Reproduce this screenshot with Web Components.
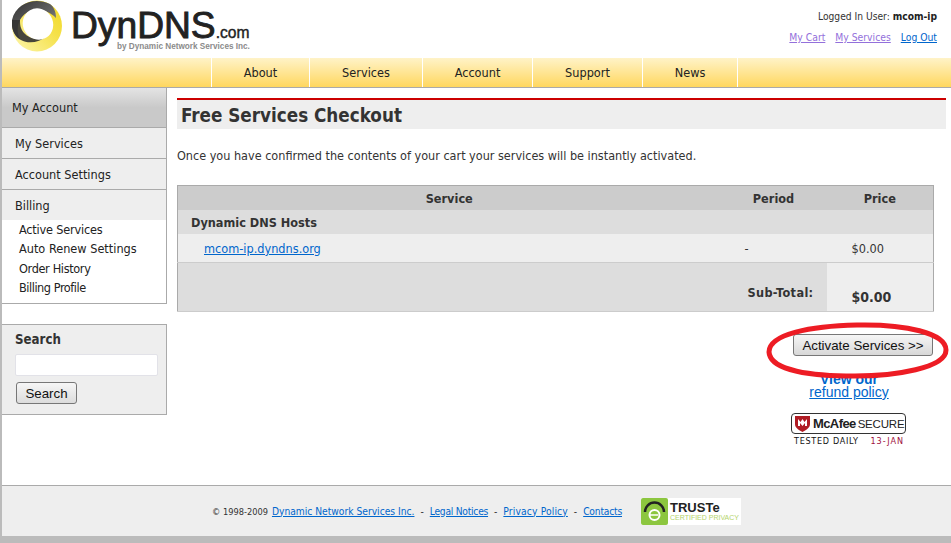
<!DOCTYPE html>
<html>
<head>
<meta charset="utf-8">
<title>DynDNS.com</title>
<style>
  html, body { margin: 0; padding: 0; background: #bbb; }
  body { height: 543px; overflow: hidden; font-family: "DejaVu Sans", sans-serif; font-stretch: condensed; font-size: 12.6px; color: #333; }
  dyn-page { height: 543px; }
</style>
</head>
<body>
<dyn-page>
  <dyn-header></dyn-header>
  <dyn-nav></dyn-nav>
  <div style="display:flex;height:397px;background:#fff">
    <dyn-sidebar></dyn-sidebar>
    <dyn-checkout></dyn-checkout>
  </div>
  <dyn-footer></dyn-footer>
</dyn-page>
<script>
class dynPage extends HTMLElement {
  constructor() {
    super();
    this.attachShadow({ mode: "open" });
    this.shadowRoot.innerHTML = `
    <style>
      :host { display: block; margin-left: 2px; position: relative; }
    </style>
    <slot></slot>`;
  }
}
class dynHeader extends HTMLElement {
  constructor() {
    super();
    this.attachShadow({ mode: "open" });
    this.shadowRoot.innerHTML = `
    <style>
      :host { display: flex; justify-content: space-between; height: 58px; background: #fff; }
      .logo { display: flex; margin-left: 10px; }
      .words { margin-left: 9px; font-family: "Liberation Sans", sans-serif; font-stretch: normal; width: 180px; }
      .name { font-size: 37.2px; line-height: 38px; color: #222; -webkit-text-stroke: .9px #222; padding-top: 6px; white-space: nowrap; }
      .name small { font-size: 15.6px; line-height: 0; -webkit-text-stroke: .4px #222; }
      .by { font-size: 8.2px; font-weight: bold; color: #8b8b8b; margin: -2px 0 0 46px; white-space: nowrap; }
      .user { padding: 11px 14px 0 0; text-align: right; font-size: 10.2px; color: #333; }
      .user b { color: #222; }
      .links { margin-top: 9px; font-size: 10.3px; }
      .links a { color: #9370db; margin-left: 7px; }
      .links a.out { color: #0066cc; }
    </style>
    <div class="logo">
      <svg width="50" height="52" viewBox="0 0 50 52">
        <defs>
          <linearGradient id="dk" x1="0" y1="0" x2="1" y2="1">
            <stop offset="0" stop-color="#333"/><stop offset=".6" stop-color="#666"/><stop offset="1" stop-color="#aaa"/>
          </linearGradient>
          <linearGradient id="yl" x1="0" y1="1" x2="1" y2="0">
            <stop offset="0" stop-color="#fdf6b0"/><stop offset=".6" stop-color="#f5e14a"/><stop offset="1" stop-color="#f0d820"/>
          </linearGradient>
        </defs>
        <ellipse cx="25" cy="26" rx="25" ry="25.5" fill="url(#yl)"/>
        <path d="M38 4 C24 -3 4 2 0 20 C-1 28 2 36 8 39 C2 28 8 12 22 10 C30 9 38 12 44 18 C44 12 42 7 38 4Z" fill="url(#dk)"/>
        <path d="M0 20 C-1 30 3 37 9 40 C16 44 27 43 35 36 C28 40 18 40 12 33 C8 28 8 24 8 20Z" fill="#333" opacity=".9"/>
        <ellipse cx="26" cy="24" rx="15" ry="16" fill="#fff" transform="rotate(-30 26 24)"/>
      </svg>
      <div class="words">
        <div class="name">DynDNS<small>.com</small></div>
        <div class="by">by Dynamic Network Services Inc.</div>
      </div>
    </div>
    <div class="user">
      <div>Logged In User: <b>mcom-ip</b></div>
      <div class="links"><a href="#">My Cart</a> <a href="#">My Services</a> <a class="out" href="#">Log Out</a></div>
    </div>`;
  }
}
class dynNav extends HTMLElement {
  constructor() {
    super();
    this.attachShadow({ mode: "open" });
    const items = [["About", 98], ["Services", 113], ["Account", 110], ["Support", 110], ["News", 96]];
    this.shadowRoot.innerHTML = `
    <style>
      :host { display: flex; height: 29px; padding-left: 209px; border-bottom: 1px solid #aaa; background: linear-gradient(#fff3c8, #ffd75f); }
      div { box-sizing: border-box; border-left: 1px solid #fff; line-height: 30px; text-align: center; color: #222; }
      div:last-child { border-right: 1px solid #fff; }
    </style>
    ${items.map(([t, w]) => `<div style="width:${w}px">${t}</div>`).join("")}`;
  }
}
class dynSidebar extends HTMLElement {
  constructor() {
    super();
    this.attachShadow({ mode: "open" });
    this.shadowRoot.innerHTML = `
    <style>
      :host { display: block; box-sizing: border-box; width: 165px; flex: none; color: #222; }
      .top { height: 39px; line-height: 40px; padding-left: 10px; background: linear-gradient(#e4e4e4, #c9c9c9 50%); border: solid #aaa; border-width: 0 1px 1px 0; }
      .item { height: 30px; line-height: 31px; padding-left: 13px; background: #eee; border: solid #aaa; border-width: 0 1px 1px 0; }
      .item.open { border-bottom: 0; }
      ul { list-style: none; margin: 0; padding: 0 0 6px 17px; background: #fff; border: solid #aaa; border-width: 0 1px 1px 0; }
      li { height: 19.3px; line-height: 20px; }
      form { margin: 20px 0 0; height: 91px; box-sizing: border-box; border: solid #aaa; border-width: 1px 1px 1px 0; background: #eee; padding: 7px 0 0 13px; }
      h4 { margin: 0; font-size: 13.2px; line-height: 16px; color: #333; }
      input { display: block; box-sizing: border-box; width: 143px; height: 22px; margin: 6px 0 0; border: 1px solid #e2e2e8; background: #fff; border-radius: 2px; padding: 0; }
      button { display: block; width: 61px; height: 22px; margin: 6px 0 0 1px; padding: 0; font: 13.3px "Liberation Sans", sans-serif; color: #111; border: 1px solid #777; border-radius: 3px; background: linear-gradient(#f6f6f6, #dcdcdc); }
    </style>
    <div class="top">My Account</div>
    <div class="item">My Services</div>
    <div class="item">Account Settings</div>
    <div class="item open">Billing</div>
    <ul>
      <li style="letter-spacing:-.2px">Active Services</li>
      <li>Auto Renew Settings</li>
      <li style="letter-spacing:-.35px">Order History</li>
      <li style="letter-spacing:-.45px">Billing Profile</li>
    </ul>
    <form onsubmit="return false">
      <h4>Search</h4>
      <input type="text">
      <button>Search</button>
    </form>`;
  }
}
class dynCheckout extends HTMLElement {
  constructor() {
    super();
    this.attachShadow({ mode: "open" });
    this.shadowRoot.innerHTML = `
    <style>
      :host { display: block; flex: 1; padding: 10px 5px 0 10px; position: relative; }
      h1 { margin: 0; height: 29px; line-height: 31px; border-top: 2px solid #c00; background: #eee; padding-left: 4px; font-size: 18.7px; font-weight: bold; color: #333; }
      p { margin: 18px 0 0; line-height: 18px; font-size: 12.53px; color: #333; }
      table { margin-top: 20px; width: 757px; border-collapse: collapse; border: solid #aaa; border-width: 1px 1px 1px 1px; border-bottom-color: #ccc; font-size: 12.6px; }
      td, th { padding: 0; box-sizing: border-box; }
      th { background: #ccc; height: 24px; color: #333; padding-top: 1px; }
      th.nudge { padding-left: 2px; }
      .group td { background: #ddd; height: 24px; font-weight: bold; padding: 1px 0 0 13px; }
      .row td { background: #eee; height: 29px; border-bottom: 1px solid #ccc; padding-top: 1px; }
      .total td { height: 49px; background: #ddd; font-weight: bold; vertical-align: bottom; }
      a { color: #0066cc; }
      .act { margin: 22px 0 0; display: flex; flex-direction: column; align-items: flex-end; }
      .act button { width: 140px; height: 22px; margin-right: 13px; padding: 0; font: 13.3px "Liberation Sans", sans-serif; color: #111; border: 1px solid #777; border-radius: 3px; background: linear-gradient(#f6f6f6, #d8d8d8); }
      .refund { width: 156px; margin: 17px 19px 0 0; text-align: center; font: 14px/12px "Liberation Sans", sans-serif; color: #0066cc; }
      .refund b { display: block; }
      .refund a { line-height: 14px; display: block; }
      .badge { margin: 14px 40px 0 0; width: 115px; font-size: 9px; letter-spacing: .7px; color: #111; }
      .mc { box-sizing: border-box; width: 115px; height: 21px; border: 1px solid #333; border-radius: 4px; display: flex; align-items: center; padding-left: 3px; font: bold 13px "Liberation Sans", sans-serif; letter-spacing: -.6px; color: #222; white-space: nowrap; }
      .mc svg { margin-right: 3px; flex: none; }
      .mc span { font-size: 11.5px; letter-spacing: -.2px; font-weight: normal; margin-left: 2px; }
      .td { display: flex; justify-content: space-between; margin: 2px 2px 0 3px; }
      .td i { font-style: normal; color: #a01040; letter-spacing: 1px; }
      .ring { position: absolute; left: 598px; top: 233px; pointer-events: none; }
    </style>
    <h1>Free Services Checkout</h1>
    <p>Once you have confirmed the contents of your cart your services will be instantly activated.</p>
    <table>
      <tr><th class="nudge" style="width:541px">Service</th><th class="nudge" style="width:108px">Period</th><th>Price</th></tr>
      <tr class="group"><td colspan="3">Dynamic DNS Hosts</td></tr>
      <tr class="row"><td style="padding-left:26px"><a href="#">mcom-ip.dyndns.org</a></td><td style="padding-left:26px;">-</td><td style="padding-left:25px">$0.00</td></tr>
      <tr class="total">
        <td colspan="2" style="text-align:right;padding:0 13px 11px 0;letter-spacing:.35px">Sub-Total:</td>
        <td style="background:#eee;padding:0 0 6px 25px;font-size:14px">$0.00</td>
      </tr>
    </table>
    <div class="act">
      <button>Activate Services &gt;&gt;</button>
      <div class="refund"><b>View our</b><a href="#">refund policy</a></div>
      <div class="badge">
        <div class="mc">
          <svg width="15" height="17" viewBox="0 0 15 17"><path d="M0 1h15v8c0 4-4 6-7.500 8C4 15 0 13 0 9Z" fill="#b01c24"/><path d="M3 11V4l2.500 3L7.500 4l2 3L12 4v7h-2V8L7.500 11 5 8v3Z" fill="#fff"/></svg>McAfee<span>SECURE</span>
        </div>
        <div class="td"><span>TESTED DAILY</span><i>13-JAN</i></div>
      </div>
    </div>
    <svg class="ring" width="186" height="60" viewBox="0 0 186 60">
      <path d="M92 4C140 3 181 12 181 29C181 47 130 55 90 55C48 55 5 50 4 31C4 13 46 5 92 4Z" fill="none" stroke="#ed1c24" stroke-width="5"/>
    </svg>`;
  }
}
class dynFooter extends HTMLElement {
  constructor() {
    super();
    this.attachShadow({ mode: "open" });
    this.shadowRoot.innerHTML = `
    <style>
      :host { display: flex; align-items: center; height: 50px; padding-left: 210px; border-top: 1px solid #aaa; background: #eee; font-size: 10.2px; color: #333; white-space: nowrap; }
      .copy { font-size: 9.2px; }
      a { color: #0066cc; margin: 0 6px; }
      a:first-of-type { margin-left: 4px; }
      .truste { display: flex; align-items: center; width: 100px; height: 27px; margin-left: 13px; background: #fff; font-family: "Liberation Sans", sans-serif; font-stretch: normal; }
      .truste svg { flex: none; margin-right: 2px; }
      .truste b { display: block; font-size: 13px; line-height: 13px; color: #222; }
      .truste span { display: block; font-size: 7px; line-height: 8px; color: #b5d46c; white-space: nowrap; }
    </style>
    <span class="copy">© 1998-2009</span> <a href="#">Dynamic Network Services Inc.</a> - <a href="#" style="letter-spacing:-.25px">Legal Notices</a> - <a href="#" style="letter-spacing:.15px">Privacy Policy</a> - <a href="#" style="letter-spacing:-.2px">Contacts</a>
    <div class="truste">
      <svg width="27" height="27" viewBox="0 0 27 27"><rect width="27" height="27" rx="2" fill="#8cc63f"/><path d="M4 14a9.500 9.500 0 0 1 19 0" fill="none" stroke="#222" stroke-width="2.500"/><circle cx="13.500" cy="17" r="5" fill="none" stroke="#fff" stroke-width="2"/><path d="M9 17h8" stroke="#fff" stroke-width="1.500"/></svg>
      <div><b>TRUSTe</b><span>CERTIFIED PRIVACY</span></div>
    </div>`;
  }
}
customElements.define('dyn-page', dynPage);
customElements.define('dyn-header', dynHeader);
customElements.define('dyn-nav', dynNav);
customElements.define('dyn-sidebar', dynSidebar);
customElements.define('dyn-checkout', dynCheckout);
customElements.define('dyn-footer', dynFooter);
</script>
</body>
</html>
